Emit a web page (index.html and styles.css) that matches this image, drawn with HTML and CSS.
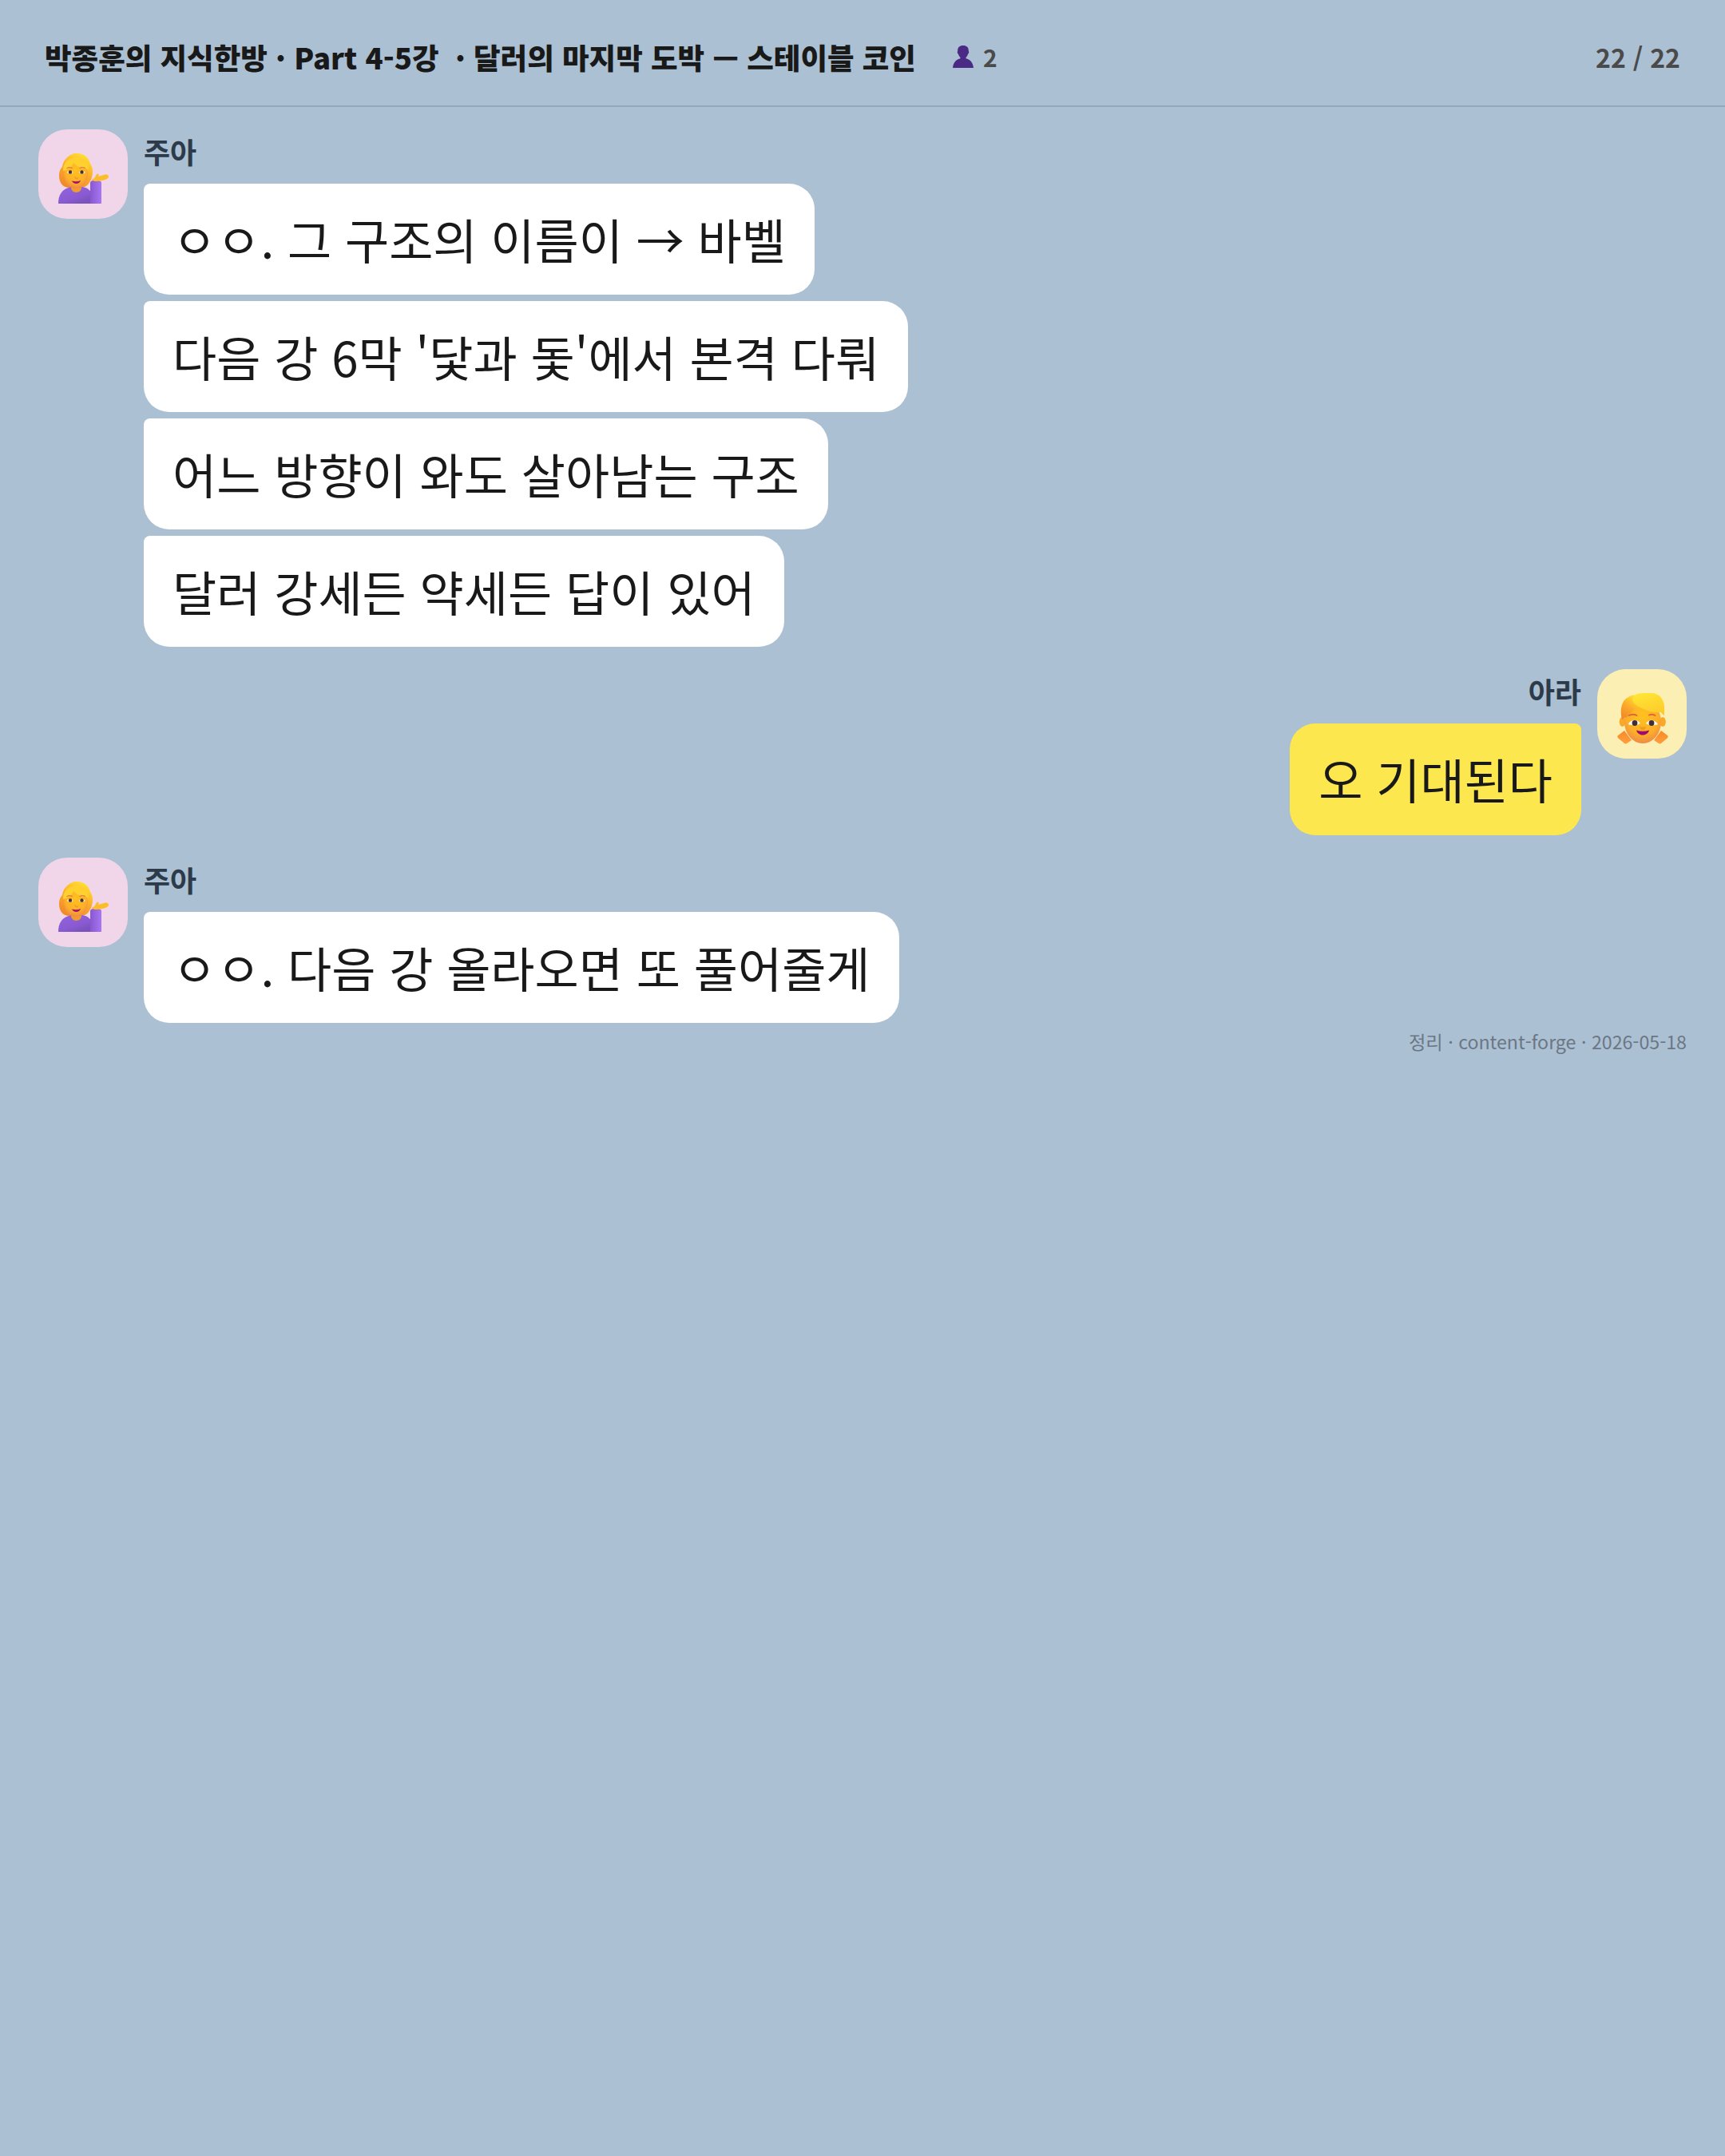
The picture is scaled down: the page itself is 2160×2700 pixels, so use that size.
FILE: index.html
```html
<!DOCTYPE html>
<html lang="ko">
	<head>
		<meta charset="UTF-8">
		<title>22 / 22</title>
		<link rel="stylesheet" href="styles.css">
	</head>
	<body>
		<svg class="defs" width="0" height="0">
			<defs>
				<linearGradient id="hairG" x1="0.6" y1="0" x2="0.1" y2="1">
					<stop offset="0" stop-color="#ffdb30"/>
					<stop offset="0.45" stop-color="#fbaa2a"/>
					<stop offset="1" stop-color="#ee8428"/>
				</linearGradient>
				<radialGradient id="skinG" cx="0.5" cy="0.36" r="0.7">
					<stop offset="0" stop-color="#ffc21f"/>
					<stop offset="0.62" stop-color="#fdaf28"/>
					<stop offset="1" stop-color="#e98050"/>
				</radialGradient>
				<linearGradient id="shirtG" x1="0" y1="0" x2="0.6" y2="1">
					<stop offset="0" stop-color="#9463e0"/>
					<stop offset="0.7" stop-color="#8a5ad2"/>
					<stop offset="1" stop-color="#7a52bc"/>
				</linearGradient>
				<linearGradient id="armG" x1="0" y1="0" x2="1" y2="0">
					<stop offset="0" stop-color="#8858d0"/>
					<stop offset="1" stop-color="#a776f4"/>
				</linearGradient>
				<linearGradient id="tailG" x1="0" y1="0" x2="0" y2="1">
					<stop offset="0" stop-color="#f78a2c"/>
					<stop offset="1" stop-color="#ff9f3a"/>
				</linearGradient>
				<linearGradient id="fringeG" x1="0.3" y1="0" x2="0.7" y2="1">
					<stop offset="0" stop-color="#ffe534"/>
					<stop offset="1" stop-color="#fdc92c"/>
				</linearGradient>
				<g id="juah">
					<path fill="url(#hairG)" d="M1 28c0-6 2-9 4-11 1-9 9-17 18-17 9 0 15 5 17 13 2 3 3 6 3 10 0 6-2 11-5 15-3 4-7 5-11 5H14C6 43 1 37 1 28z"/>
					<path fill="url(#shirtG)" d="M0 63c0-11 5-18 13-20l6-2h7l8 2c3 1 7 4 8 8v12z"/>
					<path fill="url(#armG)" d="M40 37c0-2 3-3.500 7-3.500 4 0 7 1.500 7 3.500v26H40z"/>
					<path fill="#f29a2b" d="M16 38h13v5c0 3-3 6-6.500 6S16 46 16 43z"/>
					<ellipse cx="22" cy="27" rx="15" ry="17" fill="url(#skinG)"/>
					<path fill="#ffd02e" d="M6 22C6 11 13 5 23 5c9 0 15 6 15 15-6 0-15-3-19-8-1 4-6 9-13 10z"/>
					<path fill="none" stroke="#e07a48" stroke-width="1.300" stroke-linecap="round" d="M11 18.500c2-1 4.500-1 6.500 0M27 18.500c2-1 4.500-1 6.500 0"/>
					<path fill="#fff" d="M11 24c1.500-3 6-3 7.500 0-1.500 1.500-6 1.500-7.500 0zM26 24c1.500-3 6-3 7.500 0-1.500 1.500-6 1.500-7.500 0z"/>
					<circle cx="15" cy="23.500" r="2.200" fill="#43303c"/>
					<circle cx="29.500" cy="23.500" r="2.200" fill="#43303c"/>
					<path fill="#f29a22" d="M20 28c.6 3 1 4 3 4.500 1.500 0 2-1 2-2-2 .5-3.500-.5-5-2.500z"/>
					<path fill="#a80f6e" d="M17 34.500c3.500 1 7.500 1 11-.5-.8 2.500-2.800 4-5.500 4s-4.500-1.500-5.500-3.500z"/>
					<path fill="#fdbd2a" d="M42 33.500c.5-1.500 2-2 3.500-2.500 1-2 2-5 3.500-5.500 1.200-.2 2 1 1.500 2.500l-.5 1 9-2.500c2.500-.5 4 1 4 2.500 0 1.500-1 2.500-3 3.500-3.500 1.500-8 2.500-12 2.500-3 0-5.500-.5-6-2z"/>
				</g>
			</defs>
		</svg>

		<header class="top">
			<div class="top-left">
				<span class="title">박종훈의 지식한방 · Part 4-5강&nbsp; · 달러의 마지막 도박 — 스테이블 코인</span>
				<span class="people">
					<svg class="people-icon" viewBox="0 0 26 28">
						<path fill="#4b2a86" d="M13 0c4.600 0 6.800 2.400 6.800 6 0 1 .4 1.500.4 2.600 0 1-.5 1.800-1.200 2.100-.6 2-1.500 3.400-2.500 4.200v1.300c4.800.7 8.800 4.800 9.500 11.800H0c.7-7 4.700-11.100 9.500-11.800v-1.300c-1-.8-1.900-2.200-2.500-4.200-.7-.3-1.200-1.100-1.200-2.100 0-1.100.4-1.600.4-2.600C6.200 2.400 8.400 0 13 0z"/>
					</svg>
					2
				</span>
			</div>
			<span class="page-no">22 / 22</span>
		</header>

		<main class="chat">
			<section class="msg">
				<div class="avatar avatar-pink">
					<svg class="face" viewBox="0 0 64 64"><use href="#juah"/></svg>
				</div>
				<div class="msg-body">
					<div class="name">주아</div>
					<div class="bubble">ㅇㅇ. 그 구조의 이름이 → 바벨</div>
					<div class="bubble">다음 강 6막 '닻과 돛'에서 본격 다뤄</div>
					<div class="bubble">어느 방향이 와도 살아남는 구조</div>
					<div class="bubble">달러 강세든 약세든 답이 있어</div>
				</div>
			</section>

			<section class="msg msg-me">
				<div class="avatar avatar-yellow">
					<svg class="face" viewBox="0 0 64 64">
						<path fill="url(#tailG)" d="M1 53l8-6 9 12-6 4c-1 .8-2.500.5-3.500-.5L.8 56c-.6-1-.6-2.200.2-3z"/>
						<path fill="url(#tailG)" d="M63 53l-8-6-9 12 6 4c1 .8 2.500.5 3.500-.5L63.200 56c.6-1 .6-2.200-.2-3z"/>
						<ellipse cx="6.500" cy="36" rx="3.800" ry="6" fill="#f8a92a"/>
						<ellipse cx="57" cy="36" rx="3.800" ry="6" fill="#f8a92a"/>
						<ellipse cx="32" cy="36" rx="23" ry="27" fill="url(#skinG)"/>
						<path fill="url(#hairG)" d="M6 33C3 22 5 9 14 5c3-2 6-3 9-2l4 16c-5 0-8 3-12 9-3 2-6 3-9 5z"/>
						<path fill="url(#fringeG)" d="M19 6c1-3 6-6 13-6h11c10 0 16 8 16 18v10c-1-.5-3-2-4-4-6 .5-14-.5-22-4-7-3-15-8-14-14z"/>
						<path fill="none" stroke="#d96a38" stroke-width="1.900" stroke-linecap="round" d="M15 28c3-1.500 7-1.500 9.500 0M40 27.500c2-1 5-1 7.500 .5"/>
						<path fill="#fff" d="M14 39c2-6 12-7 15-1-3 2-11 2.500-15 1zM36 38c3-5.500 12-5 15 1-4 1.500-12 1-15-1z"/>
						<circle cx="22" cy="37.500" r="3.400" fill="#3f2e3a"/>
						<circle cx="43" cy="37.500" r="3.400" fill="#3f2e3a"/>
						<path fill="#f29a22" d="M28 41c.5 4 1.500 5.500 4 5.500s3.500-1.500 4-5.500c-1 2-6.500 2-8 0z"/>
						<path fill="#a00a6c" d="M24 46.500c5 1.700 11 1.700 16 0-.8 3.500-4 6-8 6s-7-2.500-8-6z"/>
					</svg>
				</div>
				<div class="msg-body">
					<div class="name">아라</div>
					<div class="bubble bubble-me">오 기대된다</div>
				</div>
			</section>

			<section class="msg">
				<div class="avatar avatar-pink">
					<svg class="face" viewBox="0 0 64 64"><use href="#juah"/></svg>
				</div>
				<div class="msg-body">
					<div class="name">주아</div>
					<div class="bubble">ㅇㅇ. 다음 강 올라오면 또 풀어줄게</div>
				</div>
			</section>

			<footer class="foot">정리 · content-forge · 2026-05-18</footer>
		</main>
	</body>
</html>
```

FILE: styles.css
```css
* {
	box-sizing: border-box;
}

html,
body {
	margin: 0;
	padding: 0;
}

body {
	width: 2160px;
	min-height: 2700px;
	background: #abc0d2;
	font-family: "Noto Sans CJK KR", "Noto Sans", sans-serif;
	color: #191919;
}

.defs {
	position: absolute;
}

.top {
	display: flex;
	justify-content: space-between;
	align-items: center;
	height: 134px;
	padding: 10px 56px 0;
	border-bottom: 2px solid #96a9bb;
}

.top-left {
	display: flex;
	align-items: center;
	gap: 46px;
}

.title {
	font-size: 36.5px;
	font-weight: 900;
	color: #191919;
}

.people {
	display: flex;
	align-items: center;
	gap: 12px;
	font-size: 30px;
	font-weight: 700;
	color: #4a4a4a;
}

.people-icon {
	width: 26px;
	height: 28px;
}

.page-no {
	font-size: 32px;
	font-weight: 700;
	color: #4a4a4a;
}

.chat {
	display: flex;
	flex-direction: column;
	gap: 28px;
	padding: 28px 48px 0;
}

.msg {
	display: flex;
	gap: 20px;
}

.msg-me {
	flex-direction: row-reverse;
}

.msg-me .msg-body {
	align-items: flex-end;
}

.avatar {
	flex: none;
	display: flex;
	align-items: center;
	justify-content: center;
	width: 112px;
	height: 112px;
	padding-top: 11px;
	padding-left: 1px;
	border-radius: 36px;
}

.avatar-pink {
	background: #f0d6e8;
}

.avatar-yellow {
	background: #fcefb4;
}

.face {
	width: 64px;
	height: 64px;
}

.msg-body {
	display: flex;
	flex-direction: column;
	align-items: flex-start;
	gap: 8px;
}

.name {
	height: 60px;
	font-size: 36px;
	font-weight: 700;
	line-height: 54px;
	color: #2c3a4a;
}

.bubble {
	padding: 29px 36px 31px;
	border-radius: 8px 32px 32px 32px;
	background: #fff;
	font-size: 60px;
	line-height: 79px;
	white-space: nowrap;
}

.bubble-me {
	background: #fce74e;
	border-radius: 32px 8px 32px 32px;
	line-height: 80px;
}

.foot {
	margin-top: -22px;
	text-align: right;
	font-size: 23.2px;
	color: #6b7785;
}
```
